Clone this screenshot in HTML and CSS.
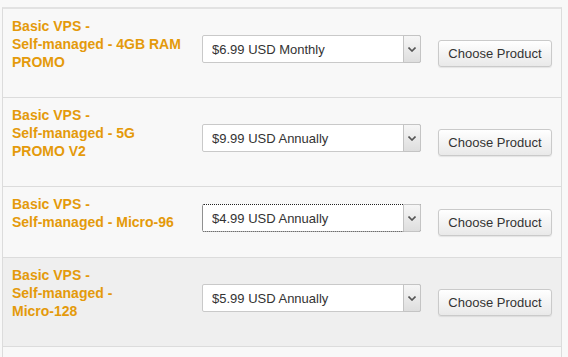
FILE: index.html
```html
<!DOCTYPE html>
<html lang="en">
<head>
  <meta charset="UTF-8">
  <title>Choose Product</title>
  <link rel="stylesheet" href="styles.css">
</head>
<body>
  <div class="products">

    <div class="product">
      <div class="product-name"><span class="group">Basic VPS -</span> Self-managed - 4GB RAM PROMO</div>
      <div class="cycle">
        <select>
          <option>$6.99 USD Monthly</option>
          <option>$19.99 USD Quarterly</option>
          <option>$69.99 USD Annually</option>
        </select>
        <span class="cycle-arrow"><svg width="8" height="5" viewBox="0 0 8 5"><path d="M0.5 0.5 L4 4 L7.5 0.5" fill="none" stroke="#555" stroke-width="1.6"/></svg></span>
      </div>
      <button class="btn">Choose Product</button>
    </div>

    <div class="product">
      <div class="product-name"><span class="group">Basic VPS -</span> Self-managed - 5G PROMO V2</div>
      <div class="cycle">
        <select>
          <option>$9.99 USD Annually</option>
        </select>
        <span class="cycle-arrow"><svg width="8" height="5" viewBox="0 0 8 5"><path d="M0.5 0.5 L4 4 L7.5 0.5" fill="none" stroke="#555" stroke-width="1.6"/></svg></span>
      </div>
      <button class="btn">Choose Product</button>
    </div>

    <div class="product">
      <div class="product-name"><span class="group">Basic VPS -</span> Self-managed - <span class="plan">Micro-96</span></div>
      <div class="cycle focused">
        <select>
          <option>$4.99 USD Annually</option>
        </select>
        <span class="cycle-arrow"><svg width="8" height="5" viewBox="0 0 8 5"><path d="M0.5 0.5 L4 4 L7.5 0.5" fill="none" stroke="#555" stroke-width="1.6"/></svg></span>
      </div>
      <button class="btn">Choose Product</button>
    </div>

    <div class="product active">
      <div class="product-name"><span class="group">Basic VPS -</span> Self-managed - <span class="plan">Micro-128</span></div>
      <div class="cycle">
        <select>
          <option>$5.99 USD Annually</option>
        </select>
        <span class="cycle-arrow"><svg width="8" height="5" viewBox="0 0 8 5"><path d="M0.5 0.5 L4 4 L7.5 0.5" fill="none" stroke="#555" stroke-width="1.6"/></svg></span>
      </div>
      <button class="btn">Choose Product</button>
    </div>

  </div>
</body>
</html>
```

FILE: styles.css
```css
* {
  box-sizing: border-box;
}

html, body {
  overflow: hidden;
}

body {
  margin: 7px 6px 0 2px;
  background: #f8f8f8;
  font-family: "Liberation Sans", Arial, sans-serif;
  font-size: 13px;
  color: #333;
}

.products {
  min-height: 350px;
  border: 1px solid #dcdcdc;
  border-top: 2px solid #e2e2e2;
  border-bottom: none;
  background: #f8f8f8;
}

.product {
  display: flex;
  align-items: center;
  border-bottom: 1px solid #dcdcdc;
  padding: 0 9px;
}

.product.active {
  background: #efefef;
}

.product-name {
  align-self: flex-start;
  flex: none;
  width: 169.2px;
  margin-right: 4.8px;
  padding: 8px 0 26px;
  line-height: 18px;
  font-size: 14px;
  font-weight: bold;
  color: #e49a0b;
}

.product-name .group {
  display: block;
}

.product-name .plan {
  white-space: nowrap;
}

.cycle {
  position: relative;
  flex: none;
  width: 219px;
  height: 28px;
  margin: 0 17px 8px 16px;
  border: 1px solid #c9c9c9;
  border-radius: 2px;
  background: #fff;
}

.cycle.focused {
  border: 1px dotted #222;
}

.cycle select {
  appearance: none;
  -webkit-appearance: none;
  width: 100%;
  height: 100%;
  border: none;
  outline: none;
  background: transparent;
  padding: 0 20px 0 9px;
  font-family: inherit;
  font-size: 13px;
  color: #333;
}

.cycle-arrow {
  position: absolute;
  top: -1px;
  right: -1px;
  bottom: -1px;
  width: 18px;
  display: flex;
  align-items: center;
  justify-content: center;
  border: 1px solid #c4c4c4;
  border-radius: 0 2px 2px 0;
  background: linear-gradient(#f6f6f6, #dedede);
  pointer-events: none;
}

.btn {
  flex: none;
  width: 114px;
  height: 27px;
  padding: 0;
  border: 1px solid #cacaca;
  border-radius: 3px;
  background: linear-gradient(#ffffff, #e9e9e9);
  box-shadow: 0 1px 1px rgba(0, 0, 0, 0.08);
  font-family: inherit;
  font-size: 13px;
  color: #333;
  cursor: pointer;
}
```
